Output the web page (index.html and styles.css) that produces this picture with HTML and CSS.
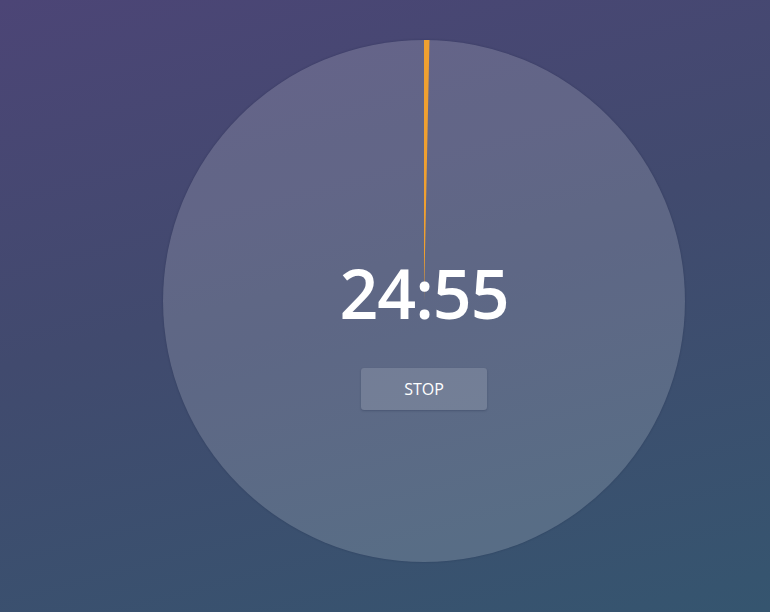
FILE: index.html
```html
<!DOCTYPE html>
<html lang="en">
<head>
<meta charset="utf-8">
<title>Timer</title>
<link rel="stylesheet" href="styles.css">
</head>
<body>
<main class="stage">
  <div class="dial">
    <svg class="progress" viewBox="0 0 522 522" width="522" height="522" aria-hidden="true">
      <path d="M261 261 L261 0 A261 261 0 0 1 266.47 0.06 Z" fill="#f0a030"/>
    </svg>
    <div class="content">
      <div class="time">24:55</div>
      <button class="stop">STOP</button>
    </div>
  </div>
</main>
</body>
</html>
```
FILE: styles.css
```css
html, body {
  margin: 0;
  height: 100%;
}
body {
  background: linear-gradient(165deg, #4c4576 0%, #414a6e 45%, #35556f 100%);
  font-family: "Open Sans", "Liberation Sans", sans-serif;
  overflow: hidden;
}
.stage {
  padding: 40px 0 0 163px;
}
.dial {
  position: relative;
  width: 522px;
  height: 522px;
  border-radius: 50%;
  background: rgba(255, 255, 255, 0.16);
  box-shadow: 0 0 2px rgba(20, 30, 60, 0.35);
}
.progress {
  position: absolute;
  left: 0;
  top: 0;
}
.content {
  position: relative;
  height: 100%;
  display: flex;
  flex-direction: column;
  align-items: center;
  padding-top: 211px;
  box-sizing: border-box;
}
.time {
  color: #fff;
  font-size: 68px;
  font-weight: 600;
  line-height: 84px;
  letter-spacing: -1px;
}
.stop {
  margin-top: 33px;
  width: 126px;
  height: 42px;
  border: 0;
  border-radius: 3px;
  background: rgba(255, 255, 255, 0.14);
  box-shadow: 0 1px 2px rgba(20, 30, 60, 0.25);
  color: #fff;
  font-family: "Open Sans", "Liberation Sans", sans-serif;
  font-size: 16px;
  padding: 0;
}
```
